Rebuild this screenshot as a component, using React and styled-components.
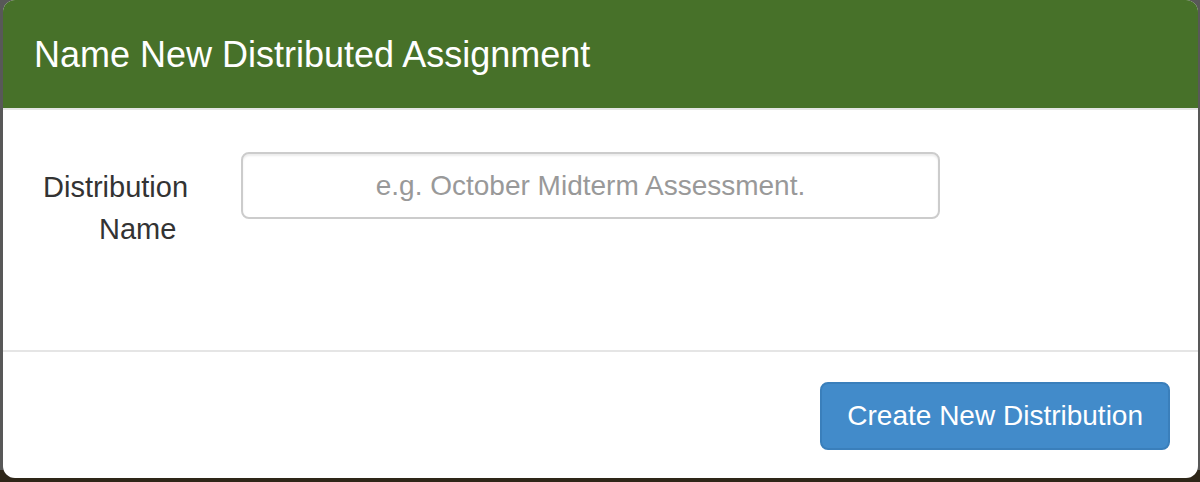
import React from 'react';
import styled, { createGlobalStyle } from 'styled-components';

const GlobalStyle = createGlobalStyle`
  html, body {
    margin: 0;
    padding: 0;
    background: #2e2618;
  }
  body {
    font-family: "Liberation Sans", Arial, Helvetica, sans-serif;
  }
`;

const Backdrop = styled.div`
  width: 1200px;
  height: 482px;
  box-sizing: border-box;
  padding: 0 2px 4px 3px;
  background: linear-gradient(to bottom, #585858 0, #585858 470px, #2e2618 470px);
  overflow: hidden;
`;

const Modal = styled.div`
  height: 478px;
  background: #fff;
  border-radius: 12px;
  overflow: hidden;
  display: flex;
  flex-direction: column;
`;

const Header = styled.div`
  height: 110px;
  box-sizing: border-box;
  background: #477129;
  border-bottom: 2px solid #e5e5e5;
  display: flex;
  align-items: center;
  padding: 0 31px;
  flex-shrink: 0;
`;

const Title = styled.h4`
  margin: 0;
  color: #fff;
  font-size: 36px;
  font-weight: normal;
  line-height: 1;
  padding-top: 2px;
`;

const Body = styled.div`
  height: 242px;
  flex-shrink: 0;
  box-sizing: border-box;
  padding: 42px 30px 0 30px;
  display: flex;
  align-items: flex-start;
  border-bottom: 2px solid #e5e5e5;
`;

const Label = styled.label`
  width: 208px;
  flex-shrink: 0;
  color: #333;
  font-size: 29px;
  line-height: 42px;
  padding-top: 14px;
  padding-left: 10px;
  box-sizing: border-box;
`;

const LabelLine = styled.span`
  display: block;
  padding-left: ${p => p.indent || 0}px;
`;

const Input = styled.input`
  width: 699px;
  height: 67px;
  box-sizing: border-box;
  border: 2px solid #cccccc;
  border-radius: 8px;
  font-family: "Liberation Sans", Arial, Helvetica, sans-serif;
  font-size: 28px;
  text-align: center;
  color: #555;
  outline: none;
  margin-top: 0;
  box-shadow: inset 0 2px 2px rgba(0, 0, 0, 0.075);
  &::placeholder {
    color: #999;
  }
`;

const Footer = styled.div`
  flex: 1;
  display: flex;
  justify-content: flex-end;
  align-items: flex-start;
  padding: 30px 28px 0 0;
`;

const Button = styled.button`
  height: 68px;
  padding: 0 25px;
  background: #428bca;
  border: 2px solid #3a7fbb;
  border-radius: 8px;
  color: #fff;
  font-family: "Liberation Sans", Arial, Helvetica, sans-serif;
  font-size: 28px;
  cursor: pointer;
`;

export default function App() {
  return (
    <>
      <GlobalStyle />
      <Backdrop>
        <Modal>
          <Header>
            <Title>Name New Distributed Assignment</Title>
          </Header>
          <Body>
            <Label htmlFor="distName">
              <LabelLine>Distribution</LabelLine>
              <LabelLine indent={56}>Name</LabelLine>
            </Label>
            <Input id="distName" placeholder="e.g. October Midterm Assessment." />
          </Body>
          <Footer>
            <Button>Create New Distribution</Button>
          </Footer>
        </Modal>
      </Backdrop>
    </>
  );
}
